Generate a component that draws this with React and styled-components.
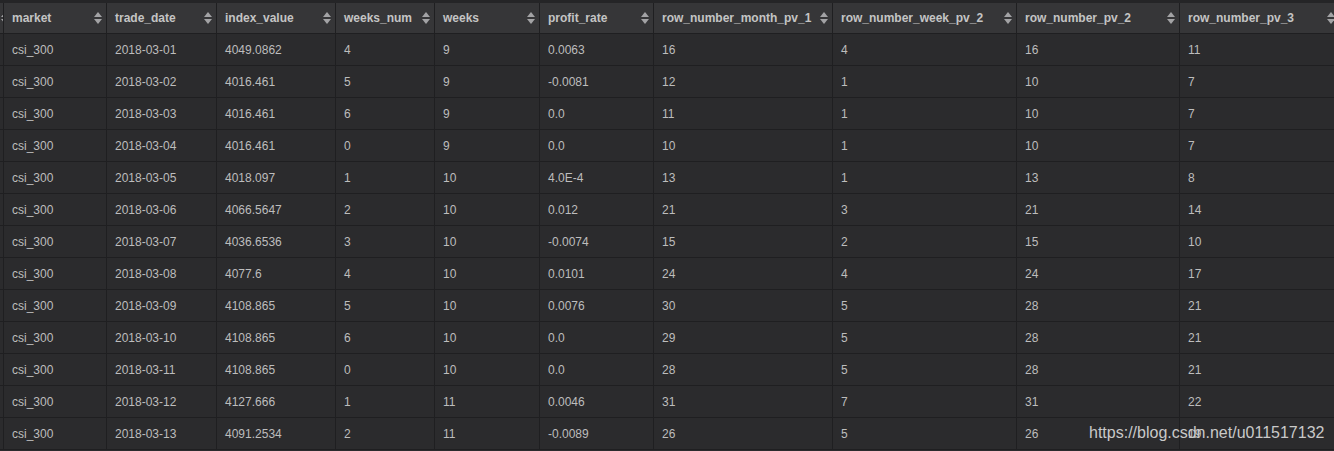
import React from 'react';
import styled, { createGlobalStyle } from 'styled-components';

const GlobalStyle = createGlobalStyle`
  html, body {
    margin: 0;
    padding: 0;
    background: #2b2b2d;
    overflow: hidden;
  }
  body {
    font-family: "Liberation Sans", Arial, sans-serif;
  }
`;

const COLS = '4px 103px 110px 119px 99px 105px 114px 179px 184px 163px 160px';

const Frame = styled.div`
  position: relative;
  width: 1334px;
  height: 451px;
  overflow: hidden;
  background: #2b2b2d;
  border-top: 3px solid #252527;
  box-sizing: border-box;
`;

const HeaderRow = styled.div`
  display: grid;
  grid-template-columns: ${COLS};
  height: 31px;
  background: #363638;
  border-bottom: 1px solid #1f1f21;
  box-sizing: border-box;
`;

const HeaderCell = styled.div`
  display: flex;
  align-items: center;
  justify-content: space-between;
  padding: 0 4px 0 8px;
  border-right: 1px solid #1f1f21;
  overflow: hidden;
  color: #c4c4c4;
  font-size: 12px;
  font-weight: bold;
  white-space: nowrap;
  box-sizing: border-box;
`;

const EdgeCell = styled.div`
  display: flex;
  align-items: center;
  justify-content: flex-end;
  overflow: hidden;
  border-right: 1px solid #1f1f21;
  box-sizing: border-box;
`;

const Row = styled.div`
  display: grid;
  grid-template-columns: ${COLS};
  height: 32px;
  border-bottom: 1px solid #1f1f21;
  box-sizing: border-box;
`;

const Cell = styled.div`
  display: flex;
  align-items: center;
  padding-left: 8px;
  border-right: 1px solid #1f1f21;
  color: #bdbdbd;
  font-size: 12px;
  white-space: nowrap;
  overflow: hidden;
  box-sizing: border-box;
`;

const Watermark = styled.div`
  position: absolute;
  left: 1089px;
  top: 421px;
  font-size: 16px;
  color: #c9c9c9;
  white-space: nowrap;
  pointer-events: none;
`;

const SortIcon = ({ shift = 0 }) => (
  <svg width="8" height="12" viewBox="0 0 8 12" style={{ flexShrink: 0, marginRight: shift }}>
    <path d="M4 0 L8 5 L0 5 Z" fill="#a3a3a5" />
    <path d="M0 7 L8 7 L4 12 Z" fill="#a3a3a5" />
  </svg>
);

const columns = [
  'market',
  'trade_date',
  'index_value',
  'weeks_num',
  'weeks',
  'profit_rate',
  'row_number_month_pv_1',
  'row_number_week_pv_2',
  'row_number_pv_2',
  'row_number_pv_3',
];

const rows = [
  ['csi_300', '2018-03-01', '4049.0862', '4', '9', '0.0063', '16', '4', '16', '11'],
  ['csi_300', '2018-03-02', '4016.461', '5', '9', '-0.0081', '12', '1', '10', '7'],
  ['csi_300', '2018-03-03', '4016.461', '6', '9', '0.0', '11', '1', '10', '7'],
  ['csi_300', '2018-03-04', '4016.461', '0', '9', '0.0', '10', '1', '10', '7'],
  ['csi_300', '2018-03-05', '4018.097', '1', '10', '4.0E-4', '13', '1', '13', '8'],
  ['csi_300', '2018-03-06', '4066.5647', '2', '10', '0.012', '21', '3', '21', '14'],
  ['csi_300', '2018-03-07', '4036.6536', '3', '10', '-0.0074', '15', '2', '15', '10'],
  ['csi_300', '2018-03-08', '4077.6', '4', '10', '0.0101', '24', '4', '24', '17'],
  ['csi_300', '2018-03-09', '4108.865', '5', '10', '0.0076', '30', '5', '28', '21'],
  ['csi_300', '2018-03-10', '4108.865', '6', '10', '0.0', '29', '5', '28', '21'],
  ['csi_300', '2018-03-11', '4108.865', '0', '10', '0.0', '28', '5', '28', '21'],
  ['csi_300', '2018-03-12', '4127.666', '1', '11', '0.0046', '31', '7', '31', '22'],
  ['csi_300', '2018-03-13', '4091.2534', '2', '11', '-0.0089', '26', '5', '26', '19'],
];

const App = () => (
  <>
    <GlobalStyle />
    <Frame>
      <HeaderRow>
        <EdgeCell>
          <SortIcon shift={-6} />
        </EdgeCell>
        {columns.map((c) => (
          <HeaderCell key={c}>
            <span>{c}</span>
            <SortIcon />
          </HeaderCell>
        ))}
      </HeaderRow>
      {rows.map((r, i) => (
        <Row key={i}>
          <EdgeCell />
          {r.map((v, j) => (
            <Cell key={j}>{v}</Cell>
          ))}
        </Row>
      ))}
      <Watermark>https://blog.csdn.net/u011517132</Watermark>
    </Frame>
  </>
);

export default App;
